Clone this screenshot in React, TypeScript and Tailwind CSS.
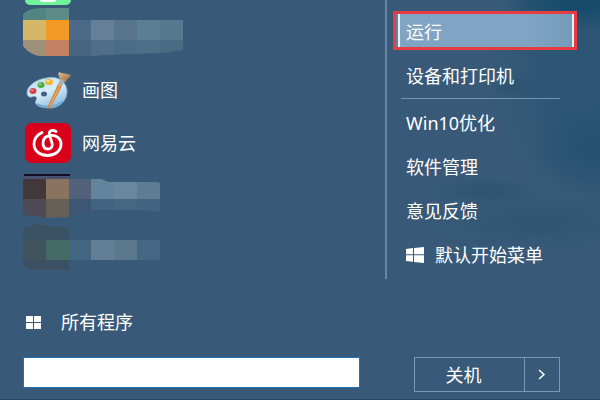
import type { ReactNode } from 'react';

type Block = [x: number, y: number, w: number, h: number, fill: string];

const gameBlocks: Block[] = [
  [0, 0, 23, 12, '#518581'], [23, 0, 23, 12, '#5c8c85'],
  [0, 12, 23, 20, '#d5b767'], [23, 12, 23, 20, '#f39a26'],
  [0, 32, 23, 16, '#9f9179'], [23, 32, 23, 16, '#c48262'],
  [46, 12, 22, 20, '#4a6a87'], [68, 12, 23, 20, '#667f98'], [91, 12, 23, 20, '#58758d'],
  [114, 12, 23, 20, '#5b7e93'], [137, 12, 23, 20, '#58788f'],
  [46, 32, 22, 16, '#46657f'], [68, 32, 23, 16, '#506e88'], [91, 32, 23, 16, '#4c6b84'],
  [114, 32, 23, 16, '#4f6f88'], [137, 32, 23, 16, '#4b6a84'],
];

const darkBlocks: Block[] = [
  [1, 0, 46, 2, '#160c25'], [1, 2, 46, 3, '#49516f'],
  [0, 5, 23, 20, '#433839'], [23, 5, 23, 20, '#8a735f'],
  [0, 25, 23, 19, '#4d4955'], [23, 25, 23, 19, '#665f57'],
  [46, 5, 22, 20, '#526179'], [68, 5, 23, 20, '#64839c'], [91, 5, 23, 20, '#69879f'], [114, 5, 23, 20, '#5e7d95'],
  [46, 25, 22, 15, '#3d5772'], [68, 25, 23, 15, '#426482'], [91, 25, 23, 15, '#456782'], [114, 25, 23, 15, '#426480'],
];

const tealBlocks: Block[] = [
  [0, 0, 46, 16, '#3b5265'], [0, 16, 23, 20, '#3f545d'], [23, 16, 23, 20, '#456965'], [0, 36, 46, 11, '#3c5163'],
  [46, 16, 22, 20, '#426582'], [68, 16, 23, 20, '#637f95'], [91, 16, 23, 20, '#5b788d'], [114, 16, 23, 20, '#456783'],
];

function Mosaic({ id, blocks, outline, height }: { id: string; blocks: Block[]; outline: string; height: number }) {
  return (
    <svg width="160" height={height} aria-hidden="true" shapeRendering="crispEdges">
      <clipPath id={id}><path d={outline} /></clipPath>
      <g clipPath={`url(#${id})`}>
        {blocks.map(([x, y, w, h, fill]) => (
          <rect key={`${x}-${y}`} x={x} y={y} width={w} height={h} fill={fill} />
        ))}
      </g>
    </svg>
  );
}

function PaintIcon() {
  return (
    <svg width="48" height="40" viewBox="0 0 48 40" aria-hidden="true">
      <defs>
        <linearGradient id="palette" x1="0" y1="0" x2="0.6" y2="1">
          <stop offset="0" stopColor="#b9daee" />
          <stop offset="0.55" stopColor="#d9edf8" />
          <stop offset="1" stopColor="#8fc0e2" />
        </linearGradient>
        <linearGradient id="bristle" x1="0" y1="0" x2="1" y2="1">
          <stop offset="0" stopColor="#dfc094" />
          <stop offset="1" stopColor="#94673f" />
        </linearGradient>
      </defs>
      <path d="M22 8C33 5 42 11 43 20C44 30 36 38 26 38C20 38 14 37 12 34C10 31 14 29 12 27C10 25 6 29 4 26C0 19 9 10 22 8Z" fill="url(#palette)" stroke="#7aa5c6" strokeWidth="0.8" />
      <path d="M13 34C20 38 33 37 39 31" fill="none" stroke="#6ca7d5" strokeWidth="1.5" />
      <ellipse cx="20" cy="24" rx="3" ry="2.5" fill="#3a6386" />
      <ellipse cx="9" cy="21" rx="3.5" ry="3" fill="#ce4549" /><ellipse cx="8" cy="20" rx="1.5" ry="1" fill="#ef9192" />
      <ellipse cx="17" cy="15" rx="3.5" ry="3" fill="#4dac45" /><ellipse cx="16" cy="14" rx="1.5" ry="1" fill="#a2d98a" />
      <ellipse cx="25" cy="12" rx="4" ry="3" fill="#f1b237" /><ellipse cx="24" cy="11" rx="2" ry="1" fill="#ffe48a" />
      <path d="M34 14L38 16L27 37Q24 40 24 36Z" fill="#cf8745" />
      <path d="M36 15L26 36" stroke="#f0b577" strokeWidth="1" />
      <path d="M34 14L37 7L42 10L38 16Z" fill="#aab0b2" />
      <path d="M36 9C34 5 34 3 35 2C38 4 43 3 47 5C46 8 43 8 42 12Z" fill="url(#bristle)" />
    </svg>
  );
}

function MusicIcon() {
  return (
    <svg width="46" height="40" viewBox="0 0 46 40" aria-hidden="true">
      <rect width="46" height="40" rx="7" fill="#d9001b" />
      <path d="M17 9.500C12 12 9 16 9 21C9 28 15 32.500 22.500 32.500C30 32.500 36 28 36 21C36 15 31 12 25.500 12.500C20.500 13 18 16 18 20C18 24 20 26 23 26C26.500 26 28 23 27 20L24.500 12C23.500 8 27 6 31 8.500" fill="none" stroke="#fff" strokeWidth="2.8" strokeLinecap="round" strokeLinejoin="round" />
    </svg>
  );
}

function WindowsLogo() {
  return (
    <svg width="18" height="16" viewBox="0 0 18 16" fill="#fff" aria-hidden="true">
      <path d="M0 2L7 1V7.300H0ZM8 0.900L18 0V7.300H8ZM0 8.300H7V14.800L0 13.900ZM8 8.300H18V16L8 14.900Z" />
    </svg>
  );
}

function NavItem({ children, icon }: { children: ReactNode; icon?: ReactNode }) {
  return (
    <button type="button" className="flex h-11 items-center gap-[11px] pl-[19px] text-left">
      {icon}
      {children}
    </button>
  );
}

export default function App() {
  return (
    <main className="flex min-h-screen flex-col overflow-hidden border-b border-[#2b4864] bg-[#385a78] bg-[radial-gradient(ellipse_80px_30px_at_97%_0%,#174b6b_30%,transparent),radial-gradient(ellipse_70px_45px_at_100%_37%,#255270_20%,transparent),radial-gradient(ellipse_110px_160px_at_100%_16%,#2c5674_45%,transparent),radial-gradient(ellipse_60px_16px_at_81%_48%,#2f5573_20%,transparent),radial-gradient(ellipse_120px_28px_at_90%_56%,#305674_20%,transparent),radial-gradient(ellipse_30px_12px_at_86%_22%,#2f5270_10%,transparent)] bg-no-repeat font-['Noto_Sans','Noto_Sans_CJK_SC',sans-serif] text-lg leading-6 text-white">
      <div className="flex">
        <ul className="flex flex-1 flex-col pl-6">
          <li className="h-2">
            <div className="ml-px flex h-[5px] w-[46px] justify-center rounded-b-md bg-[#72f49c]">
              <span className="h-0.5 w-4 rounded-b bg-white" />
            </div>
          </li>
          <li className="-ml-px h-14">
            <button type="button" aria-label="应用">
              <Mosaic id="game" blocks={gameBlocks} height={49} outline="M0 6Q6 0 17 0H46V12H160V42L140 45L80 47L72 48H16Q6 46 0 38Z" />
            </button>
          </li>
          <li>
            <button type="button" className="flex h-[52px] items-center gap-2.5"><PaintIcon />画图</button>
          </li>
          <li>
            <button type="button" className="ml-px flex h-[54px] items-center gap-[11px]"><MusicIcon />网易云</button>
          </li>
          <li className="-ml-px mt-1 h-[50px]">
            <button type="button" aria-label="应用">
              <Mosaic id="dark" blocks={darkBlocks} height={45} outline="M0 0H48V5H78L86 8H133L137 9V38L120 36H70L46 43L20 44L14 42L0 41Z" />
            </button>
          </li>
          <li className="-ml-px">
            <button type="button" aria-label="应用">
              <Mosaic id="teal" blocks={tealBlocks} height={47} outline="M0 5L12 0L46 4V16H137V36H46V46H12Q0 45 0 36Z" />
            </button>
          </li>
        </ul>
        <nav className="flex h-[279px] w-[215px] flex-col border-l-2 border-[#6688a5] pt-[11px]">
          <button type="button" className="mb-1 ml-1.5 mr-[23px] h-[39px] border-[3px] border-[#e83c40] bg-[#6384a1] pl-0.5 text-left">
            <span className="flex h-full items-center border-x-2 border-[#e5eff7] bg-linear-to-r from-[#80a4c3] from-75% to-[#749cba] pl-1.5 pt-0.5">运行</span>
          </button>
          <NavItem>设备和打印机</NavItem>
          <hr className="mb-0.5 ml-3.5 mr-10 border-[#7195b4]" />
          <NavItem>Win10优化</NavItem>
          <NavItem>软件管理</NavItem>
          <NavItem>意见反馈</NavItem>
          <NavItem icon={<WindowsLogo />}>默认开始菜单</NavItem>
        </nav>
      </div>
      <button type="button" className="mt-[31px] flex items-center gap-5 self-start pl-[26px]">
        <span className="grid grid-cols-2 gap-px">
          <i className="h-[6px] w-[7px] bg-white" /><i className="h-[6px] w-[7px] bg-white" />
          <i className="h-[6px] w-[7px] bg-white" /><i className="h-[6px] w-[7px] bg-white" />
        </span>
        所有程序
      </button>
      <form className="mt-[23px] flex items-start pl-[23px] pr-10" onSubmit={(event) => event.preventDefault()}>
        <input type="text" aria-label="搜索" className="h-[31px] min-w-0 flex-1 border border-[#1b73b8] bg-white px-2 text-black outline-none" />
        <div className="ml-[54px] flex h-[35px] w-[146px] border border-[#7799b5]">
          <button type="button" className="flex-1 pr-3">关机</button>
          <button type="button" aria-label="关机选项" className="flex w-[35px] items-center justify-center border-l border-[#7799b5]">
            <svg width="8" height="11" viewBox="0 0 8 11" fill="none" stroke="#fff" strokeWidth="1.5" aria-hidden="true"><path d="M1 1L6 5.500L1 10" /></svg>
          </button>
        </div>
      </form>
    </main>
  );
}
